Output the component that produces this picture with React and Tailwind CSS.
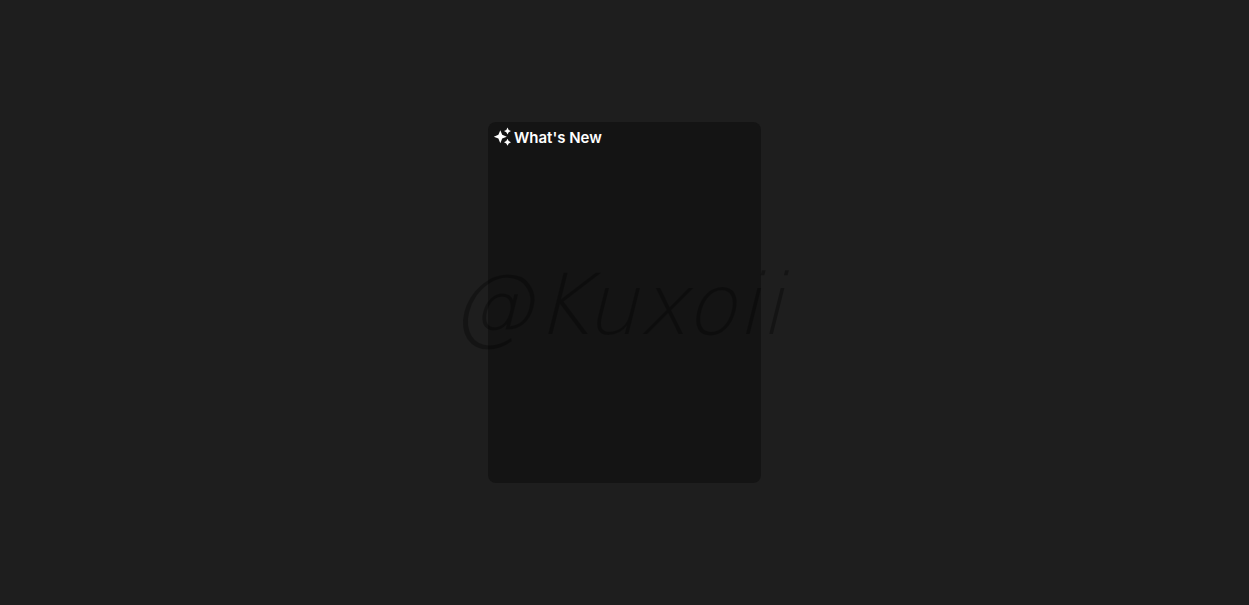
function Sparkles() {
  return (
    <svg viewBox="0 0 20 20" className="size-5 shrink-0 fill-current" aria-hidden="true">
      <path d="M8.3 4.2 10.2 8.8 14.8 10.7 10.2 12.6 8.3 17.2 6.4 12.6 1.8 10.7 6.4 8.8Z" />
      <path d="M15.5 1.6 16.7 3.9 19 5.1 16.7 6.3 15.5 8.6 14.3 6.3 12 5.1 14.3 3.9Z" />
      <path d="M15.5 12.7 16.7 15 19 16.2 16.7 17.4 15.5 19.7 14.3 17.4 12 16.2 14.3 15Z" />
    </svg>
  )
}

export default function App() {
  return (
    <div className="grid min-h-screen place-items-center bg-[#1e1e1e] font-['Inter',sans-serif]">
      <main className="relative h-[361px] w-[273px] rounded-lg bg-[#141414]">
        <header className="flex items-start gap-0.5 px-1 pt-1 text-white">
          <Sparkles />
          <h1 className="text-[15px] leading-6 font-semibold">What's New</h1>
        </header>
        {/* Watermark, wider than the card on both sides */}
        <div className="pointer-events-none absolute inset-0 flex items-center justify-center pt-1 pr-4">
          <span className="font-['DejaVu_Sans_Light','Inter',sans-serif] text-[84px] leading-none font-extralight whitespace-nowrap text-black/30 italic">@Kuxoii</span>
        </div>
      </main>
    </div>
  )
}
